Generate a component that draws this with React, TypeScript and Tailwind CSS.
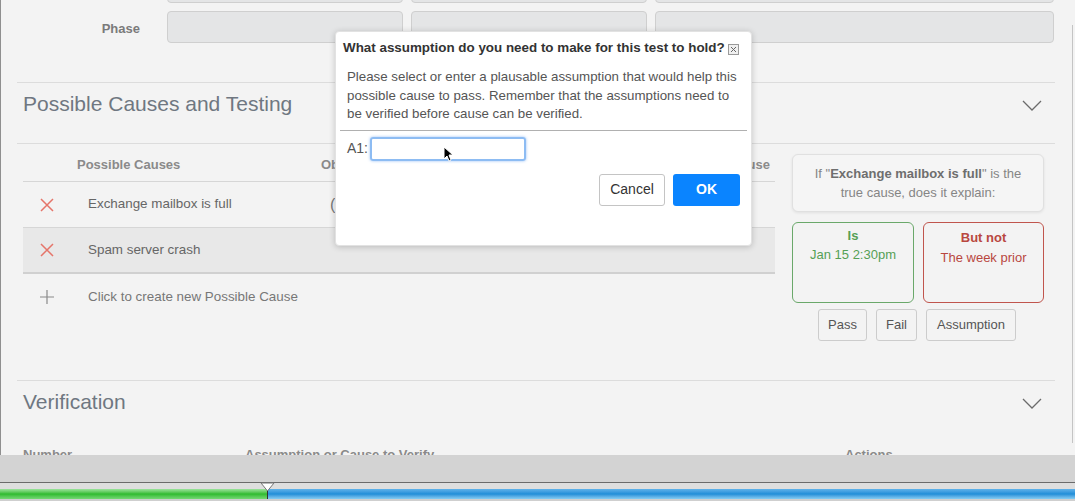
import React from 'react';

const Chevron = () => (
  <svg width="20" height="11" viewBox="0 0 20 11" fill="none">
    <path d="M1 1l9 9 9-9" stroke="#6b6b6b" strokeWidth="1.3" />
  </svg>
);

const RedX = () => (
  <svg width="14" height="14" viewBox="0 0 14 14" fill="none">
    <path d="M1 1l12 12M13 1L1 13" stroke="#e5756a" strokeWidth="1.5" />
  </svg>
);

const Plus = () => (
  <svg width="14" height="14" viewBox="0 0 14 14" fill="none">
    <path d="M7 0v14M0 7h14" stroke="#8a8a8a" strokeWidth="1.2" />
  </svg>
);

const causes = ['Exchange mailbox is full', 'Spam server crash'];

const testButtons = [
  { label: 'Pass', w: 'w-[49px]' },
  { label: 'Fail', w: 'w-[41px]' },
  { label: 'Assumption', w: 'w-[90px]' },
];

export default function App() {
  return (
    <div className="relative w-[1075px] h-[501px] overflow-hidden bg-[#f3f3f3] font-['Liberation_Sans',Arial,sans-serif]">
      {/* page body */}
      <div className="h-[455px] overflow-hidden border-l border-[#8f8f8f] flex">
        <div className="w-[1038px] ml-[16px] shrink-0">
          {/* top form rows */}
          <div className="mt-[-29px] flex flex-col gap-[8px]">
            {['', 'Phase'].map((label, i) => (
              <div key={i} className="flex items-center gap-[8px]">
                <div className="w-[142px] text-right pr-[19px] pt-[3px] text-[13px] font-bold text-[#7a7a7a]">{label}</div>
                <div className="w-[236px] h-[32px] rounded-[4px] bg-[#e4e5e6] border border-[#cfcfcf]" />
                <div className="w-[236px] h-[32px] rounded-[4px] bg-[#e4e5e6] border border-[#cfcfcf]" />
                <div className="w-[399px] h-[32px] rounded-[4px] bg-[#e4e5e6] border border-[#cfcfcf]" />
              </div>
            ))}
          </div>

          {/* Possible causes section */}
          <div className="mt-[39px] border-t border-[#dcdcdc]">
            <div className="h-[60px] flex items-start justify-between pl-[6px] pr-[13px] pt-[9px]">
              <h2 className="text-[21px] leading-[24px] text-[#6f7781]">Possible Causes and Testing</h2>
              <div className="mt-[8px]"><Chevron /></div>
            </div>
          </div>
          <div className="border-t border-[#dcdcdc] h-[237px] flex pl-[6px]">
            <div className="w-[752px]">
              <div className="h-[38px] pt-[4px] border-b border-[#d6d6d6] flex items-center text-[13px] font-bold text-[#8a8a8a]">
                <div className="w-[54px]" />
                <div className="w-[244px]">Possible Causes</div>
                <div className="flex-1">Observations</div>
                <div className="pr-[5px]">Most Likely Cause</div>
              </div>
              {causes.map((c, i) => (
                <div
                  key={c}
                  className={
                    i === 1
                      ? 'h-[46px] flex items-center bg-[#e8e8e8] border-b-2 border-[#d0d0d0]'
                      : 'h-[46px] flex items-center border-b border-[#d6d6d6]'
                  }
                >
                  <div className="w-[65px] pl-[17px]"><RedX /></div>
                  <div className="w-[242px] text-[13.4px] text-[#666]">{c}</div>
                  <div className="text-[16px] text-[#777]">{i === 0 ? '(1)' : ''}</div>
                </div>
              ))}
              <div className="h-[46px] flex items-center">
                <div className="w-[65px] pl-[17px]"><Plus /></div>
                <div className="text-[13.4px] text-[#777]">Click to create new Possible Cause</div>
              </div>
            </div>

            <div className="ml-[17px] w-[252px] pt-[10px] flex flex-col">
              <div className="h-[58px] rounded-[6px] border border-[#e0e0e0] bg-[#f5f5f5] shadow-[0_1px_3px_rgba(0,0,0,0.08)] flex items-center justify-center text-center text-[13px] leading-[19px] text-[#858585] px-[10px]">
                <p>
                  If "<b className="text-[#6e6e6e]">Exchange mailbox is full</b>" is the
                  <br />
                  true cause, does it explain:
                </p>
              </div>
              <div className="mt-[10px] flex gap-[9px]">
                <div className="w-[122px] h-[81px] rounded-[6px] border border-[#6aa86a] text-center text-[13px] pt-[4px] text-[#55a055]">
                  <div className="font-bold leading-[18px]">Is</div>
                  <div className="leading-[20px]">Jan 15 2:30pm</div>
                </div>
                <div className="w-[121px] h-[81px] rounded-[6px] border border-[#c0554d] text-center text-[13px] pt-[6px] text-[#b9473f]">
                  <div className="font-bold leading-[18px]">But not</div>
                  <div className="leading-[22px]">The week prior</div>
                </div>
              </div>
              <div className="mt-[6px] flex justify-center gap-[9px] pr-[2px] text-[13px] text-[#555]">
                {testButtons.map((b) => (
                  <button key={b.label} className={`${b.w} h-[32px] rounded-[3px] border border-[#cccccc] bg-[#f3f3f3]`}>
                    {b.label}
                  </button>
                ))}
              </div>
            </div>
          </div>

          {/* Verification section */}
          <div className="border-t border-[#dcdcdc]">
            <div className="h-[60px] flex items-start justify-between pl-[6px] pr-[13px] pt-[9px]">
              <h2 className="text-[21px] leading-[24px] text-[#6f7781]">Verification</h2>
              <div className="mt-[8px]"><Chevron /></div>
            </div>
            <div className="flex pl-[6px] pt-[6px] text-[13px] leading-[16px] font-bold text-[#8a8a8a]">
              <div className="w-[222px]">Number</div>
              <div className="w-[600px]">Assumption or Cause to Verify</div>
              <div>Actions</div>
            </div>
          </div>
        </div>
        {/* scrollbar */}
        <div className="flex-1 flex justify-end pr-[2px] pt-[25px] pb-[12px]">
          <div className="w-px bg-[#c4c4c4]" />
        </div>
      </div>

      {/* bottom timeline */}
      <div className="h-[28px] bg-[#d3d3d3] border-b border-[#6b6b6b]" />
      <div className="h-[6px] bg-[#dedede]" />
      <div className="h-[10px] flex">
        <div className="w-[267px] bg-gradient-to-b from-[#9be39b] via-[#2dbb2d] to-[#74d874]" />
        <div className="w-px bg-[#333]" />
        <div className="flex-1 bg-gradient-to-b from-[#5fb2ea] via-[#1e8ed8] to-[#86cdf2]" />
      </div>
      <div className="h-[2px] bg-[#cfcfcf]" />
      <svg className="absolute left-[260px] top-[482px]" width="15" height="10" viewBox="0 0 15 10">
        <path d="M1 1h13L7.5 9z" fill="#fff" stroke="#777" strokeWidth="1" />
      </svg>

      {/* modal */}
      <div className="absolute left-[335px] top-[31px] w-[417px] h-[215px] bg-white rounded-[4px] shadow-[0_1px_6px_rgba(0,0,0,0.2)] border border-[#e2e2e2]">
        <div className="flex items-center pl-[7px] pt-[8px] pr-[12px]">
          <h3 className="text-[13.4px] leading-[16px] font-bold text-[#333] whitespace-nowrap">What assumption do you need to make for this test to hold?</h3>
          <div className="ml-[3px] mt-[3px] w-[12px] h-[11px] border border-[#9a9a9a] bg-[#f0f0f0] flex items-center justify-center">
            <svg width="7" height="7" viewBox="0 0 7 7"><path d="M1 1l5 5M6 1L1 6" stroke="#666" strokeWidth="1" /></svg>
          </div>
        </div>
        <p className="mt-[12px] pl-[11px] text-[13.3px] leading-[18.5px] text-[#555] whitespace-nowrap">
          Please select or enter a plausable assumption that would help this
          <br />
          possible cause to pass. Remember that the assumptions need to
          <br />
          be verified before cause can be verified.
        </p>
        <div className="mt-[6px] mx-[4px] border-t border-[#b0b0b0]" />
        <div className="mt-[6px] pl-[11px] flex items-center gap-[2px]">
          <span className="text-[14px] text-[#555]">A1:</span>
          <div className="w-[156px] h-[24px] rounded-[3px] border-2 border-[#8dbcf3] shadow-[0_0_3px_rgba(80,150,240,0.6)]" />
        </div>
        <div className="mt-[13px] pr-[11px] flex justify-end gap-[8px] text-[14px]">
          <button className="w-[66px] h-[32px] rounded-[3px] border border-[#c4c4c4] bg-white text-[#333]">Cancel</button>
          <button className="w-[67px] h-[32px] rounded-[3px] bg-[#0a84ff] text-white font-bold">OK</button>
        </div>
      </div>

      {/* mouse cursor */}
      <svg className="absolute left-[443px] top-[146px]" width="10" height="16" viewBox="0 0 10 16">
        <path d="M1 1v12l3-3 2 5 2-1-2-5h4z" fill="#000" stroke="#fff" strokeWidth="1" />
      </svg>
    </div>
  );
}
